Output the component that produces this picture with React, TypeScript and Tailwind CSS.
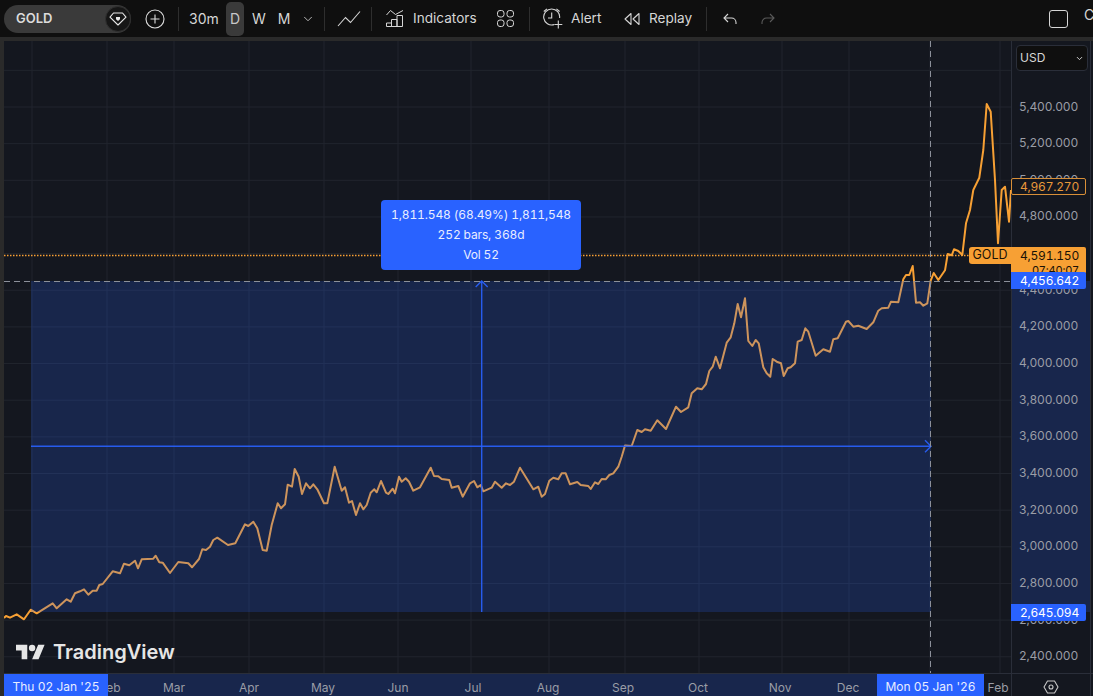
import React from 'react';
import { ChevronDown } from 'lucide-react';

// traced from the reference, page coordinates
const series =
  '4,618 6,616 10,617.7 16.7,614.3 24,619.3 30.7,609.7 36.7,613.3 52.7,603.3 56.7,608.3 66.7,599.3 70.7,601.7 75,593.3 80,591.3 84,589.3 88.3,594.7 92.7,590.7 96.7,590.7 99.3,585 102.7,584 112.7,571.3 120,573.3 124,563.7 129.3,565.3 135,560.7 138,568.3 141.7,559.3 153.3,558.7 155.7,555.7 159.3,562.3 162.7,562.7 170,573 178.3,562 188.3,563.3 192,567.3 199,559 202.3,549.3 206,550 210,546.7 213.3,540 217.3,537.7 228,545 235.3,543.3 245,524.3 248.3,526 253.3,521.7 257.3,528.3 262.7,550 266.7,550.7 271.7,525 277.7,503.3 281,508.3 285,504.3 287.7,484.7 292,486.7 294.7,469 298.7,476.7 302,494 306,483.3 310,488.3 313.3,484.3 317.3,489.3 324,503.3 327.3,503.3 334.7,466.7 341.7,490.7 345,487.3 349,502.7 352,501 356,515 360,503.3 363.3,509.3 366.7,505 370.7,492.7 374.3,489.3 376.7,492.3 381,481 386,492.7 388.3,494 392.7,488.7 395,493.3 399,476.7 401.7,481.7 405.7,478.3 409,481.7 413.3,490.7 420,487.3 430.7,467.7 434,476 438.3,476.3 441.7,479 449.3,480 451.7,487.7 458.3,486 462.7,496.7 470,483.3 474,481 477.3,487.3 480.7,485 483.3,491.3 491.7,487.7 495,481.7 501.7,487.7 506,483.3 510,485 514,481.7 520,467.7 533.3,489.3 538.3,486.7 541.7,496.7 545,494 549.3,480.7 553.3,477.7 558.3,479.3 561.7,473.3 565.7,473.3 570,484.3 577.3,482 580.7,485 588.3,486 590.7,489 595,482.3 598.3,484 601.7,479 605.7,479.3 609.3,475 613.3,473.3 618.3,466.7 621.7,456.7 625,445.5 631.7,446 637.3,430 641.7,432 645,429.3 650.7,430.7 657.3,420.3 666,429 670,420 676,406.7 681,412 688.3,407.3 691.7,393.3 697.3,388.3 701.7,389.3 706,384 709.3,371 712.7,366.7 715.7,356.7 720,368.3 726.7,342.7 730.7,337.3 734.3,323.3 737.7,304 741,317.3 745,298.3 748.3,341 752.3,346 755.7,340 758.7,343.3 763.3,367.3 766.7,373.3 770.3,376.7 772.7,359 776.7,361.7 781,363.3 783.7,376 787.7,368.3 790.7,367.3 795,363.3 797.7,341.7 801.7,340 805.3,328.3 808.3,331.7 815.7,355.7 823.3,349.3 830,351.7 833.3,339.3 837.7,338.3 846,321.7 848.3,321 853.3,326.7 858.3,325.7 866.7,329 873.3,322.3 878.3,310.7 881.7,308.3 888.3,307.7 891,301.7 898.3,302.3 903.3,279.3 906,275 909.3,275 912.7,266 916,302.7 920,302.3 923.3,305.7 927.3,303.3 930.7,280.7 933.7,273 938.3,280 945,270.3 947.7,254 951.7,255.3 954,249.3 958.3,251 962.3,255 966,223.3 970,210 973.3,190 979.3,177.7 983.3,150 986.7,104 990.7,111.7 995,180 998,243.3 1001.7,190 1005,186.7 1009,221.7 1011,190';

const gridX = [32, 107, 174, 249, 324, 398, 471, 549, 625, 699, 782, 849, 930, 1000];
const prices = ['5,400.000', '5,200.000', '5,000.000', '4,800.000', '4,600.000', '4,400.000', '4,200.000', '4,000.000', '3,800.000', '3,600.000', '3,400.000', '3,200.000', '3,000.000', '2,800.000', '2,600.000', '2,400.000'];
const months = [
  { label: 'Feb', x: 110 }, { label: 'Mar', x: 174 }, { label: 'Apr', x: 249 }, { label: 'May', x: 323 },
  { label: 'Jun', x: 398 }, { label: 'Jul', x: 473 }, { label: 'Aug', x: 548 }, { label: 'Sep', x: 623 },
  { label: 'Oct', x: 698 }, { label: 'Nov', x: 780 }, { label: 'Dec', x: 848 }, { label: 'Feb', x: 998 },
];
const priceY = (i: number) => 107 + i * 36.65;

function Divider() {
  return <div className="h-[24px] w-px shrink-0 bg-[#2e2e2e]" />;
}

function Chart() {
  return (
    <svg viewBox="4 41 1007 632" className="block h-[632px] w-[1007px]" fill="none">
      {gridX.map((x) => (
        <line key={x} x1={x} x2={x} y1="41" y2="673" stroke="#21252e" />
      ))}
      {[-1, ...prices.map((_, i) => i)].map((i) => (
        <line key={i} x1="4" x2="1011" y1={priceY(i)} y2={priceY(i)} stroke="#21252e" />
      ))}
      <polyline points={series} stroke="#f7a034" strokeWidth="2" strokeLinejoin="round" />
      <line x1="4" x2="1011" y1="255.5" y2="255.5" stroke="#f7a034" strokeWidth="1.3" strokeDasharray="1.5 1.5" />
      <rect x="31" y="281" width="900" height="331" fill="#2962ff" fillOpacity="0.2" />
      <path d="M31 446.3H931M925 440.300l6 6-6 6" stroke="#2962ff" strokeWidth="1.4" strokeOpacity="0.9" />
      <path d="M481.700 612V281M475.700 287l6-6 6 6" stroke="#2962ff" strokeWidth="1.4" strokeOpacity="0.9" />
      <line x1="4" x2="1011" y1="281.5" y2="281.5" stroke="#8c909a" strokeDasharray="6 4" />
      <line x1="930.5" x2="930.5" y1="41" y2="673" stroke="#8c909a" strokeDasharray="6 4" />
    </svg>
  );
}

function Toolbar() {
  return (
    <header className="flex h-[37px] shrink-0 items-center overflow-hidden bg-[#0f0f0f] pl-[4px] text-[14px] text-[#d6d6d6]">
      <div className="flex h-[28px] w-[127px] shrink-0 items-center justify-between rounded-full bg-[#3a3a3a]">
        <span className="pl-[12px] text-[13px] font-semibold text-[#dcdcdc]">GOLD</span>
        <span className="flex h-[26px] w-[26px] items-center justify-center rounded-full border border-[#303030] bg-[#161616]">
          <svg width="18" height="14" viewBox="0 0 18 14" fill="none" stroke="#e8e8e8" strokeWidth="1.1">
            <path d="M4.500 1h9L17 5.200 9 13 1 5.200z" strokeLinejoin="round" />
            <path d="M7 5h4v2.200L9 9 7 7.200z" fill="#e8e8e8" stroke="none" />
          </svg>
        </span>
      </div>
      <svg className="ml-[14px] shrink-0" width="20" height="20" viewBox="0 0 20 20" fill="none" stroke="#dcdcdc" strokeWidth="1.1">
        <circle cx="10" cy="10" r="9" />
        <path d="M10 5.500v9M5.500 10h9" />
      </svg>
      <div className="ml-[13px]"><Divider /></div>
      <span className="ml-[10px] w-[37px] shrink-0">30m</span>
      <span className="flex h-[34px] w-[18px] shrink-0 items-center justify-center rounded-[5px] bg-[#3a3a3a] text-[#c8c8c8]">D</span>
      <span className="ml-[7px] w-[16px] shrink-0 text-center">W</span>
      <span className="ml-[9px] w-[16px] shrink-0 text-center">M</span>
      <ChevronDown className="ml-[9px] shrink-0" size={14} strokeWidth={1.4} />
      <div className="ml-[9px]"><Divider /></div>
      <svg className="ml-[12px] shrink-0" width="24" height="16" viewBox="0 0 24 16" fill="none" stroke="#d6d6d6" strokeWidth="1.1">
        <path d="M1 15L8.500 6.500l5 5L23 .5" />
      </svg>
      <div className="ml-[10px]"><Divider /></div>
      <svg className="ml-[14px] shrink-0" width="18" height="17" viewBox="0 0 18 17" fill="none" stroke="#d6d6d6" strokeWidth="1">
        <path d="M.5 5l4-4.500 5 4 7.500-4" />
        <path d="M.5 16.500V13h5v3.500zM5.500 16.500V9.500H11v7zM11 16.500v-11h5.500v11z" />
      </svg>
      <span className="ml-[9px] w-[64px] shrink-0 text-[13.6px]">Indicators</span>
      <svg className="ml-[20px] shrink-0" width="17" height="17" viewBox="0 0 17 17" fill="none" stroke="#d6d6d6" strokeWidth="1">
        <rect x="0.5" y="0.5" width="6.500" height="6.500" rx="2.500" />
        <rect x="10" y="0.5" width="6.500" height="6.500" rx="2.500" />
        <rect x="0.5" y="10" width="6.500" height="6.500" rx="2.500" />
        <rect x="10" y="10" width="6.500" height="6.500" rx="2.500" />
      </svg>
      <div className="ml-[15px]"><Divider /></div>
      <svg className="ml-[13px] shrink-0" width="21" height="21" viewBox="0 0 21 21" fill="none" stroke="#d6d6d6" strokeWidth="1.1">
        <path d="M11 16.600A8 8 0 1 1 16.600 10" />
        <path d="M8.700 4.500V10H5M.8 3.500L4 .8M16.600 3.500L13.400 .8M15.300 12.500v8M11.300 16.500h8" />
      </svg>
      <span className="ml-[7px] w-[31px] shrink-0 text-[13.6px]">Alert</span>
      <svg className="ml-[21px] mr-[1px] shrink-0" width="17" height="14" viewBox="0 0 17 14" fill="none" stroke="#d6d6d6" strokeWidth="1.1">
        <path d="M8 1.500L2 7l6 5.500zM16 1.500L10 7l6 5.500z" strokeLinejoin="round" />
      </svg>
      <span className="ml-[8px] w-[44px] shrink-0 text-[13.6px]">Replay</span>
      <div className="ml-[13px]"><Divider /></div>
      <svg className="ml-[16px] shrink-0" width="14" height="12" viewBox="0 0 14 12" fill="none" stroke="#d6d6d6" strokeWidth="1.1">
        <path d="M5 1L1 5l4 4M1 5h7.500A4.500 4.500 0 0 1 13 9.500V11" />
      </svg>
      <svg className="ml-[24px] shrink-0" width="14" height="12" viewBox="0 0 14 12" fill="none" stroke="#5a5a5a" strokeWidth="1.1">
        <path d="M9 1l4 4-4 4M13 5H5.500A4.500 4.500 0 0 0 1 9.500V11" />
      </svg>
      <div className="ml-[274px] h-[18px] w-[19px] shrink-0 rounded-[3px] border border-[#d6d6d6]" />
      <span className="ml-[16px] -mt-[8px] shrink-0">C</span>
    </header>
  );
}

function PriceAxis() {
  return (
    <div className="relative h-[632px] w-[80px] shrink-0 border-x border-[#2a2e39] text-[12px] tabular-nums tracking-[-0.2px] text-[#9a9da6]">
      <div className="absolute inset-x-0 top-[240px] h-[331px] bg-[#18264c]" />
      {prices.map((p, i) => (
        <span key={p} className="absolute right-[12px] -translate-y-1/2 whitespace-nowrap" style={{ top: priceY(i) - 41.5 }}>
          {p}
        </span>
      ))}
      <div className="absolute left-[4px] top-[4px] flex h-[26px] w-[72px] items-center justify-between rounded-[4px] border border-[#2a2e39] bg-[#0f0f0f] px-[3px] text-[12px] tracking-normal text-[#d6d6d6]">
        USD
        <ChevronDown size={9} strokeWidth={2.5} />
      </div>
      <div className="absolute -left-px top-[137px] flex h-[17px] w-[75px] items-center justify-end rounded-[2px] border border-[#d88f38] bg-[#14171f] pr-[6px] text-[#e8983a]">4,967.270</div>
      <div className="absolute -left-px top-[206px] h-[27px] w-[75px] overflow-hidden rounded-r-[2px] bg-[#f7a034] pr-[7px] text-right leading-[17px] text-[#1a1206]">
        4,591.150
        <div className="-mt-[1px] text-[11px] leading-[14px]">07:40:07</div>
      </div>
      <div className="absolute -left-px top-[231px] flex h-[17px] w-[75px] items-center justify-end rounded-r-[2px] bg-[#2962ff] pr-[7px] text-white">4,456.642</div>
      <div className="absolute -left-px top-[563px] flex h-[17px] w-[75px] items-center justify-end rounded-r-[2px] bg-[#2962ff] pr-[7px] text-white">2,645.094</div>
    </div>
  );
}

function TimeAxis() {
  return (
    <div className="flex h-[23px] shrink-0 border-t border-[#2a2e39] text-[12px] tabular-nums text-[#9a9da6]">
      <div className="relative w-[1007px] shrink-0 overflow-hidden">
        <div className="absolute inset-y-0 left-[27px] w-[900px] bg-[#18264c]" />
        {months.map((m) => (
          <span key={m.label + m.x} className="absolute top-[5px] -translate-x-1/2" style={{ left: m.x - 4 }}>
            {m.label}
          </span>
        ))}
        <div className="absolute inset-y-0 left-0 flex w-[104px] items-center justify-center bg-[#2962ff] pt-[3px] text-[#e8edff]">Thu 02 Jan &#39;25</div>
        <div className="absolute inset-y-0 left-[873px] flex w-[107px] items-center justify-center bg-[#2962ff] pt-[3px] text-[#e8edff]">Mon 05 Jan &#39;26</div>
      </div>
      <div className="flex w-[80px] shrink-0 items-center justify-center border-x border-[#2a2e39] pt-[3px]">
        <svg width="16" height="14" viewBox="0 0 16 14" fill="none" stroke="#c8c8c8" strokeWidth="1.1">
          <path d="M4.500 1h7L15 7l-3.500 6h-7L1 7z" strokeLinejoin="round" />
          <circle cx="8" cy="7" r="2" />
        </svg>
      </div>
    </div>
  );
}

export default function App() {
  return (
    <div className="flex h-[696px] w-[1093px] flex-col overflow-hidden bg-[#0f0f0f] font-['Inter',sans-serif]">
      <Toolbar />
      <div className="flex min-h-0 flex-1 border-t-4 border-[#2a2a2a] bg-[#14171f]">
        <div className="w-[4px] shrink-0 bg-[#2a2a2a]" />
        <div className="min-w-0 flex-1">
          <div className="flex">
            <div className="relative w-[1007px] shrink-0">
              <Chart />
              <div className="absolute left-[377px] top-[159px] flex h-[70px] w-[200px] flex-col items-center justify-center rounded-[4px] bg-[#2962ff] text-[12px] leading-[20px] tabular-nums tracking-[-0.14px] text-[#e8edff]">
                <span>1,811.548 (68.49%) 1,811,548</span>
                <span>252 bars, 368d</span>
                <span>Vol 52</span>
              </div>
              <div className="absolute left-[965px] top-[206px] flex h-[17px] w-[42px] items-center justify-center rounded-l-[3px] bg-[#f7a034] text-[12.5px] text-[#1a1206]">GOLD</div>
              <div className="absolute bottom-[11px] left-[12px] flex items-center gap-[8px]">
                <svg width="29" height="16" viewBox="0 4 36 18" fill="#e6e6e6">
                  <path d="M14 22H7V11H0V4h14v18zM28 22h-8l7.500-18h8L28 22z" />
                  <circle cx="20" cy="8" r="4" />
                </svg>
                <span className="text-[20px] font-semibold leading-none text-[#e6e6e6]">TradingView</span>
              </div>
            </div>
            <PriceAxis />
          </div>
          <TimeAxis />
        </div>
      </div>
    </div>
  );
}
